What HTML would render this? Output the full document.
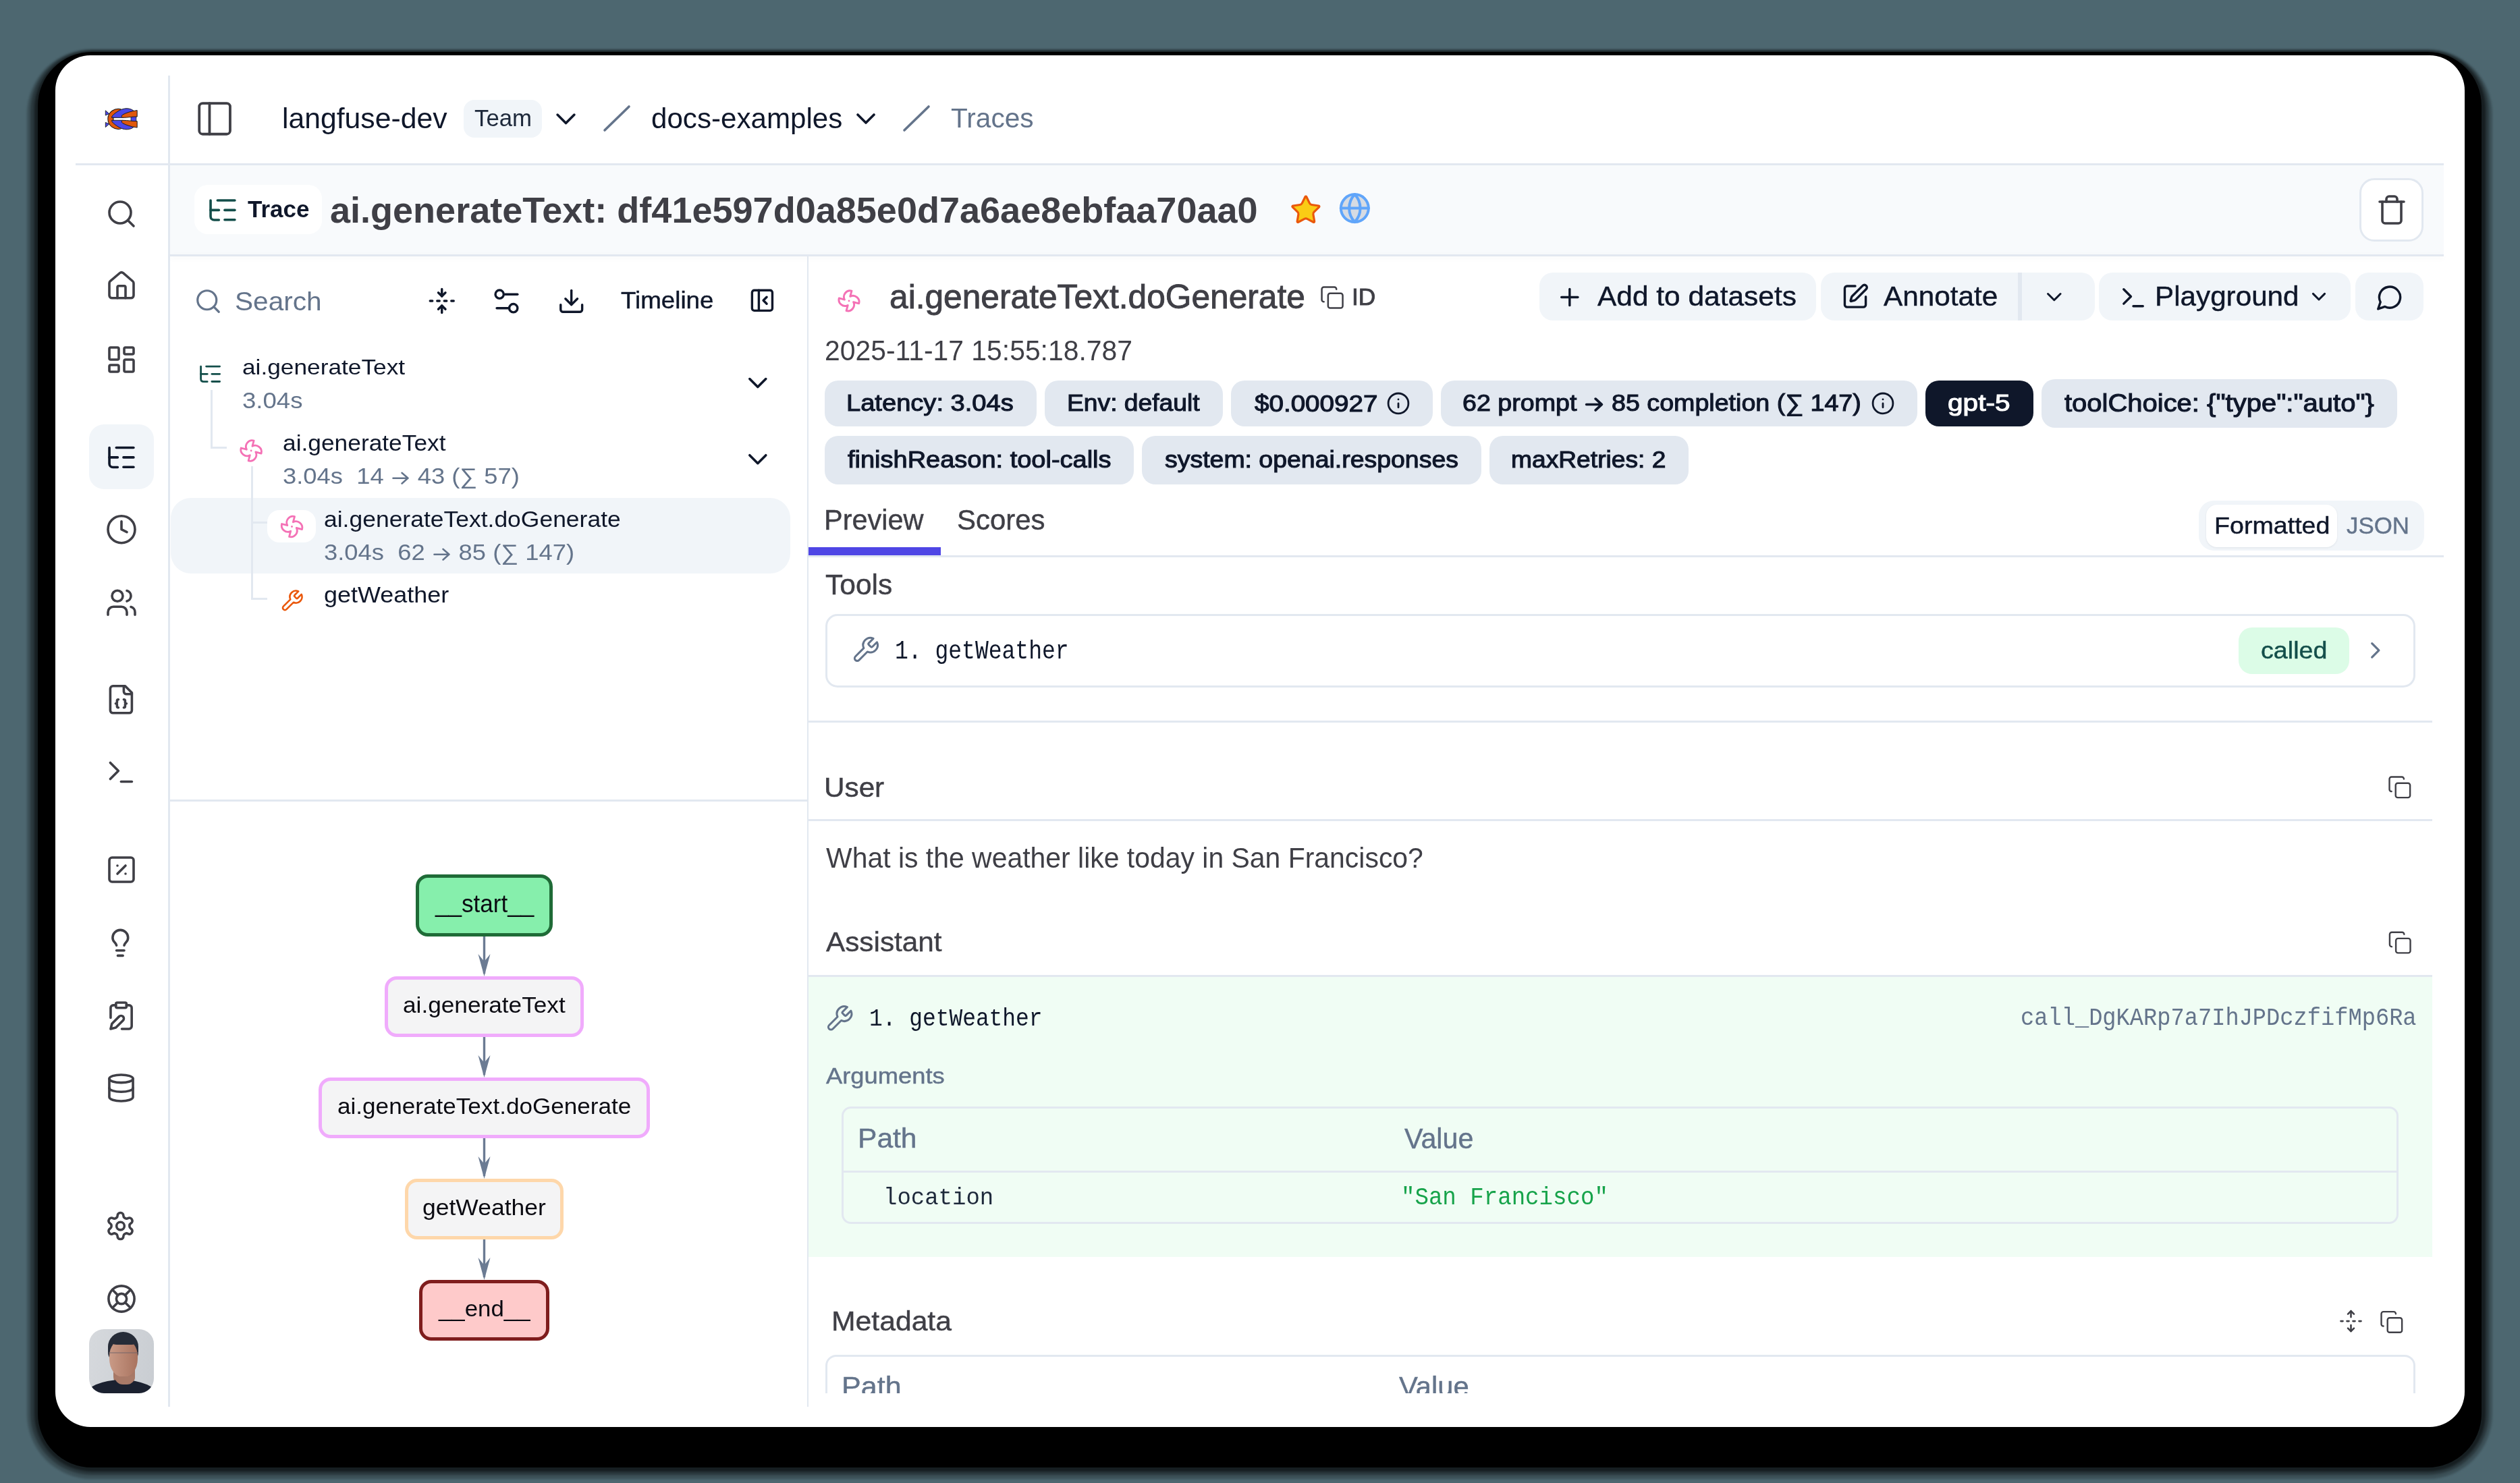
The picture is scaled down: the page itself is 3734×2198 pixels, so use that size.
<!DOCTYPE html>
<html><head><meta charset="utf-8"><style>
html,body{margin:0;padding:0;width:3734px;height:2198px;overflow:hidden;background:#4d6770;}
.r{position:absolute;box-sizing:border-box;}
.t{position:absolute;white-space:pre;line-height:1;font-family:"Liberation Sans",sans-serif;transform-origin:0 0;}
svg.main{position:absolute;left:0;top:0;}
.ia{width:.78em;height:.78em;vertical-align:-0.12em;margin:0 .02em;}
</style></head><body>
<div class=r style='left:40px;top:73px;width:3653px;height:2119px;border-radius:96px;background:rgba(0,0,0,.22);filter:blur(1.5px)'></div>
<div class=r style='left:45px;top:74px;width:3643px;height:2112px;border-radius:91px;background:rgba(0,0,0,.3);filter:blur(1.5px)'></div>
<div class=r style='left:51px;top:75.5px;width:3632px;height:2105px;border-radius:86px;background:rgba(0,0,0,.45);filter:blur(1.5px)'></div>
<div class=r style='left:56px;top:77px;width:3621px;height:2098px;border-radius:80px;background:#000'></div>
<div class=r style='left:82px;top:82px;width:3570px;height:2033px;background:#fff;border-radius:52px;'></div>
<div class=r style='left:112px;top:242px;width:3509px;height:3px;background:#e2e8f0;'></div>
<div class=r style='left:249px;top:112px;width:3px;height:1973px;background:#e2e8f0;'></div>
<div class=r style='left:252px;top:245px;width:3369px;height:132px;background:#f8fafc;'></div>
<div class=r style='left:252px;top:377px;width:3369px;height:3px;background:#e2e8f0;box-shadow:0 3px 8px rgba(15,23,42,.05);'></div>
<div class=r style='left:1196px;top:380px;width:2px;height:1705px;background:#e2e8f0;'></div>
<div class=r style='left:252px;top:1185px;width:944px;height:3px;background:#e2e8f0;'></div>
<div class=r style='left:132px;top:629px;width:96px;height:96px;background:#f1f5f9;border-radius:22px;'></div>
<div class=r style='left:687px;top:148px;width:116px;height:56px;background:#f1f5f9;border-radius:16px;'></div>
<div class=r style='left:288px;top:274px;width:189px;height:73px;background:#fff;border-radius:20px;'></div>
<div class=r style='left:3496px;top:264px;width:95px;height:94px;background:#fff;border-radius:22px;border:3px solid #e2e8f0;'></div>
<div class=r style='left:2281px;top:404px;width:410px;height:71px;background:#f1f5f9;border-radius:20px;'></div>
<div class=r style='left:2698px;top:404px;width:406px;height:71px;background:#f1f5f9;border-radius:20px;'></div>
<div class=r style='left:2990px;top:404px;width:6px;height:71px;background:#e2e8f0;'></div>
<div class=r style='left:3110px;top:404px;width:373px;height:71px;background:#f1f5f9;border-radius:20px;'></div>
<div class=r style='left:3490px;top:404px;width:101px;height:71px;background:#f1f5f9;border-radius:20px;'></div>
<div class=r style='left:1222px;top:564px;width:314px;height:68px;background:#e2e8f0;border-radius:20px;'></div>
<div class=r style='left:1548px;top:564px;width:264px;height:68px;background:#e2e8f0;border-radius:20px;'></div>
<div class=r style='left:1824px;top:564px;width:299px;height:68px;background:#e2e8f0;border-radius:20px;'></div>
<div class=r style='left:2135px;top:564px;width:706px;height:68px;background:#e2e8f0;border-radius:20px;'></div>
<div class=r style='left:2853px;top:564px;width:160px;height:68px;background:#0f172a;border-radius:20px;'></div>
<div class=r style='left:3025px;top:562px;width:527px;height:72px;background:#e2e8f0;border-radius:20px;'></div>
<div class=r style='left:1222px;top:646px;width:458px;height:72px;background:#e2e8f0;border-radius:20px;'></div>
<div class=r style='left:1692px;top:646px;width:503px;height:72px;background:#e2e8f0;border-radius:20px;'></div>
<div class=r style='left:2207px;top:646px;width:295px;height:72px;background:#e2e8f0;border-radius:20px;'></div>
<div class=r style='left:1198px;top:823px;width:2423px;height:3px;background:#e2e8f0;'></div>
<div class=r style='left:1198px;top:811px;width:196px;height:12px;background:#4f46e5;'></div>
<div class=r style='left:3258px;top:742px;width:334px;height:74px;background:#f1f5f9;border-radius:22px;'></div>
<div class=r style='left:3269px;top:748px;width:194px;height:63px;background:#fff;border-radius:16px;box-shadow:0 1px 3px rgba(15,23,42,.08);'></div>
<div class=r style='left:1223px;top:910px;width:2356px;height:109px;background:#fff;border-radius:18px;border:3px solid #e2e8f0;'></div>
<div class=r style='left:3317px;top:930px;width:164px;height:69px;background:#dcfce7;border-radius:20px;'></div>
<div class=r style='left:1198px;top:1068px;width:2406px;height:3px;background:#e2e8f0;'></div>
<div class=r style='left:1198px;top:1214px;width:2406px;height:3px;background:#e2e8f0;'></div>
<div class=r style='left:1198px;top:1445px;width:2406px;height:3px;background:#e2e8f0;'></div>
<div class=r style='left:1198px;top:1448px;width:2406px;height:415px;background:#f0fdf4;'></div>
<div class=r style='left:1247px;top:1640px;width:2307px;height:174px;border-radius:14px;border:3px solid #e2e8f0;'></div>
<div class=r style='left:1249px;top:1735px;width:2303px;height:3px;background:#e2e8f0;'></div>
<div class=r style='left:1223px;top:2008px;width:2356px;height:57px;border:3px solid #e2e8f0;border-bottom:none;border-radius:16px 16px 0 0'></div>
<div class=r style='left:253px;top:738px;width:918px;height:112px;background:#f1f5f9;border-radius:30px;'></div>
<div class=r style='left:396px;top:756px;width:72px;height:48px;background:#fff;border-radius:18px;'></div>
<div class=r style='left:312px;top:578px;width:3px;height:87px;background:#e2e8f0;'></div>
<div class=r style='left:312px;top:662px;width:24px;height:3px;background:#e2e8f0;'></div>
<div class=r style='left:372px;top:691px;width:3px;height:198px;background:#e2e8f0;'></div>
<div class=r style='left:372px;top:773px;width:24px;height:3px;background:#e2e8f0;'></div>
<div class=r style='left:372px;top:886px;width:24px;height:3px;background:#e2e8f0;'></div>
<div class=r style='left:616px;top:1296px;width:203px;height:92px;background:#86efac;border-radius:18px;border:5px solid #1f6b37;'></div>
<div class=r style='left:570px;top:1447px;width:295px;height:90px;background:#f4f4f5;border-radius:18px;border:5px solid #f0abfc;'></div>
<div class=r style='left:472px;top:1597px;width:491px;height:90px;background:#f4f4f5;border-radius:18px;border:5px solid #f0abfc;'></div>
<div class=r style='left:600px;top:1747px;width:235px;height:90px;background:#f4f4f5;border-radius:18px;border:5px solid #fed7aa;'></div>
<div class=r style='left:621px;top:1897px;width:193px;height:90px;background:#fecaca;border-radius:18px;border:5px solid #7f1d1d;'></div>
<div class=r style='left:132px;top:1970px;width:96px;height:95px;border-radius:22px;overflow:hidden;background:linear-gradient(100deg,#d6d9dd,#c9cdd2)'>
<div class=r style='left:28px;top:4px;width:45px;height:44px;border-radius:50% 50% 30% 30%;background:#262c38'></div>
<div class=r style='left:36px;top:56px;width:32px;height:30px;border-radius:0 0 16px 16px;background:#a77866'></div>
<div class=r style='left:30px;top:15px;width:42px;height:56px;border-radius:45% 45% 48% 48%;background:linear-gradient(90deg,#c99a86,#a9735f)'></div>
<div class=r style='left:34px;top:11px;width:36px;height:12px;border-radius:50% 50% 20% 20%;background:#262c38'></div>
<div class=r style='left:29px;top:34px;width:44px;height:1.5px;background:#6d6269;opacity:.45'></div>
<div class=r style='left:-6px;top:75px;width:108px;height:50px;border-radius:50% 50% 0 0;background:#1b2130'></div>
<div class=r style='left:38px;top:70px;width:30px;height:12px;border-radius:0 0 15px 15px;background:#a97a68'></div>
</div>
<svg class=main width="3734" height="2198" viewBox="0 0 3734 2198">
<g transform="translate(156.00,293.00) scale(2.0000)" fill="none" stroke="#3f3f46" stroke-width="1.800" stroke-linecap="round" stroke-linejoin="round" ><circle cx="11" cy="11" r="8"/><path d="m21 21-4.3-4.3"/></g>
<g transform="translate(156.00,399.80) scale(2.0000)" fill="none" stroke="#3f3f46" stroke-width="1.800" stroke-linecap="round" stroke-linejoin="round" ><path d="M15 21v-8a1 1 0 0 0-1-1h-4a1 1 0 0 0-1 1v8"/><path d="M3 10a2 2 0 0 1 .709-1.528l7-5.999a2 2 0 0 1 2.582 0l7 5.999A2 2 0 0 1 21 10v9a2 2 0 0 1-2 2H5a2 2 0 0 1-2-2z"/></g>
<g transform="translate(156.00,509.00) scale(2.0000)" fill="none" stroke="#3f3f46" stroke-width="1.800" stroke-linecap="round" stroke-linejoin="round" ><rect width="7" height="9" x="3" y="3" rx="1"/><rect width="7" height="5" x="14" y="3" rx="1"/><rect width="7" height="9" x="14" y="12" rx="1"/><rect width="7" height="5" x="3" y="16" rx="1"/></g>
<g transform="translate(160.00,661.50) scale(2.0500)" fill="none" stroke="#0f172a" stroke-width="1.756" stroke-linecap="round" stroke-linejoin="round"><path d="M1 1v11.5c0 1.6 1.1 2.6 2.6 2.6H7"/><path d="M1 8h6"/><path d="M6 1h12.5"/><path d="M11.2 8h7.3"/><path d="M11.2 15h7.3"/></g>
<g transform="translate(156.00,760.70) scale(2.0000)" fill="none" stroke="#3f3f46" stroke-width="1.800" stroke-linecap="round" stroke-linejoin="round" ><circle cx="12" cy="12" r="10"/><polyline points="12 6 12 12 16 14"/></g>
<g transform="translate(156.00,869.30) scale(2.0000)" fill="none" stroke="#3f3f46" stroke-width="1.800" stroke-linecap="round" stroke-linejoin="round" ><path d="M16 21v-2a4 4 0 0 0-4-4H6a4 4 0 0 0-4 4v2"/><circle cx="9" cy="7" r="4"/><path d="M22 21v-2a4 4 0 0 0-3-3.87"/><path d="M16 3.13a4 4 0 0 1 0 7.75"/></g>
<g transform="translate(155.40,1012.80) scale(2.0000)" fill="none" stroke="#3f3f46" stroke-width="1.800" stroke-linecap="round" stroke-linejoin="round" ><path d="M15 2H6a2 2 0 0 0-2 2v16a2 2 0 0 0 2 2h12a2 2 0 0 0 2-2V7Z"/><path d="M14 2v4a2 2 0 0 0 2 2h4"/><path d="M10 12a1 1 0 0 0-1 1v1a1 1 0 0 1-1 1 1 1 0 0 1 1 1v1a1 1 0 0 0 1 1"/><path d="M14 18a1 1 0 0 0 1-1v-1a1 1 0 0 1 1-1 1 1 0 0 1-1-1v-1a1 1 0 0 0-1-1"/></g>
<g transform="translate(155.40,1120.50) scale(2.0000)" fill="none" stroke="#3f3f46" stroke-width="1.800" stroke-linecap="round" stroke-linejoin="round" ><polyline points="4 17 10 11 4 5"/><line x1="12" x2="20" y1="19" y2="19"/></g>
<g transform="translate(156.00,1265.00) scale(2.0000)" fill="none" stroke="#3f3f46" stroke-width="1.800" stroke-linecap="round" stroke-linejoin="round" ><rect width="18" height="18" x="3" y="3" rx="2"/><path d="m15 9-6 6"/><path d="M9 9h.01"/><path d="M15 15h.01"/></g>
<g transform="translate(155.50,1374.60) scale(1.9000)" fill="none" stroke="#3f3f46" stroke-width="1.895" stroke-linecap="round" stroke-linejoin="round" ><path d="M15 14c.2-1 .7-1.7 1.5-2.5 1-.9 1.5-2.2 1.5-3.5A6 6 0 0 0 6 8c0 1 .2 2.2 1.5 3.5.7.7 1.3 1.5 1.5 2.5"/><path d="M9 18h6"/><path d="M10 22h4"/></g>
<g transform="translate(156.15,1482.05) scale(1.9500)" fill="none" stroke="#3f3f46" stroke-width="1.846" stroke-linecap="round" stroke-linejoin="round" ><rect width="8" height="4" x="8" y="2" rx="1"/><path d="M10.42 12.61a2.1 2.1 0 1 1 2.97 2.97L7.95 21 4 22l.99-3.95 5.43-5.44Z"/><path d="M16 4h2a2 2 0 0 1 2 2v14a2 2 0 0 1-2 2h-5.5"/><path d="M4 13.5V6a2 2 0 0 1 2-2h2"/></g>
<g transform="translate(156.10,1589.05) scale(1.9500)" fill="none" stroke="#3f3f46" stroke-width="1.846" stroke-linecap="round" stroke-linejoin="round" ><ellipse cx="12" cy="5" rx="9" ry="3"/><path d="M3 5V19A9 3 0 0 0 21 19V5"/><path d="M3 12A9 3 0 0 0 21 12"/></g>
<g transform="translate(155.10,1793.65) scale(1.9500)" fill="none" stroke="#3f3f46" stroke-width="1.846" stroke-linecap="round" stroke-linejoin="round" ><path d="M12.22 2h-.44a2 2 0 0 0-2 2v.18a2 2 0 0 1-1 1.73l-.43.25a2 2 0 0 1-2 0l-.15-.08a2 2 0 0 0-2.73.73l-.22.38a2 2 0 0 0 .73 2.73l.15.1a2 2 0 0 1 1 1.72v.51a2 2 0 0 1-1 1.74l-.15.09a2 2 0 0 0-.73 2.73l.22.38a2 2 0 0 0 2.73.73l.15-.08a2 2 0 0 1 2 0l.43.25a2 2 0 0 1 1 1.73V20a2 2 0 0 0 2 2h.44a2 2 0 0 0 2-2v-.18a2 2 0 0 1 1-1.73l.43-.25a2 2 0 0 1 2 0l.15.08a2 2 0 0 0 2.73-.73l.22-.39a2 2 0 0 0-.73-2.73l-.15-.08a2 2 0 0 1-1-1.74v-.5a2 2 0 0 1 1-1.74l.15-.09a2 2 0 0 0 .73-2.73l-.22-.38a2 2 0 0 0-2.73-.73l-.15.08a2 2 0 0 1-2 0l-.43-.25a2 2 0 0 1-1-1.73V4a2 2 0 0 0-2-2z"/><circle cx="12" cy="12" r="3"/></g>
<g transform="translate(157.09,1902.09) scale(1.9100)" fill="none" stroke="#3f3f46" stroke-width="1.885" stroke-linecap="round" stroke-linejoin="round" ><circle cx="12" cy="12" r="10"/><path d="m4.93 4.93 4.24 4.24"/><path d="m14.83 9.17 4.24-4.24"/><path d="m14.83 14.83 4.24 4.24"/><path d="m9.17 14.83-4.24 4.24"/><circle cx="12" cy="12" r="4"/></g>
<g transform="translate(287.62,145.42) scale(2.5400)" fill="none" stroke="#3f3f46" stroke-width="1.496" stroke-linecap="round" stroke-linejoin="round" ><rect width="18" height="18" x="3" y="3" rx="2"/><path d="M9 3v18"/></g>
<g transform="translate(813.65,151.44) scale(2.0700)" fill="none" stroke="#0f172a" stroke-width="1.739" stroke-linecap="round" stroke-linejoin="round" ><path d="m6 9 6 6 6-6"/></g>
<g transform="translate(1259.00,152.00) scale(2.0000)" fill="none" stroke="#0f172a" stroke-width="1.800" stroke-linecap="round" stroke-linejoin="round" ><path d="m6 9 6 6 6-6"/></g>
<path d="M896 193 L932 158" stroke="#64748b" stroke-width="3.6" stroke-linecap="round"/>
<path d="M1340 193 L1376 158" stroke="#64748b" stroke-width="3.6" stroke-linecap="round"/>
<g transform="translate(310.00,295.00) scale(2.0500)" fill="none" stroke="#134e4a" stroke-width="1.756" stroke-linecap="round" stroke-linejoin="round"><path d="M1 1v11.5c0 1.6 1.1 2.6 2.6 2.6H7"/><path d="M1 8h6"/><path d="M6 1h12.5"/><path d="M11.2 8h7.3"/><path d="M11.2 15h7.3"/></g>
<g transform="translate(1910.90,287.20) scale(2.0000)" fill="#facc15" stroke="#ea580c" stroke-width="1.600" stroke-linecap="round" stroke-linejoin="round" ><path d="M11.525 2.295a.53.53 0 0 1 .95 0l2.31 4.679a2.123 2.123 0 0 0 1.595 1.16l5.166.756a.53.53 0 0 1 .294.904l-3.736 3.638a2.123 2.123 0 0 0-.611 1.878l.882 5.14a.53.53 0 0 1-.771.56l-4.618-2.428a2.122 2.122 0 0 0-1.973 0L6.396 21.01a.53.53 0 0 1-.77-.56l.881-5.139a2.122 2.122 0 0 0-.611-1.879L2.16 9.795a.53.53 0 0 1 .294-.906l5.165-.755a2.122 2.122 0 0 0 1.597-1.16z"/></g>
<g transform="translate(1982.75,283.95) scale(2.0500)" fill="#d6dbe3" stroke="#60a5fa" stroke-width="1.951" stroke-linecap="round" stroke-linejoin="round" ><circle cx="12" cy="12" r="10"/><path d="M12 2a14.5 14.5 0 0 0 0 20 14.5 14.5 0 0 0 0-20"/><path d="M2 12h20"/></g>
<g transform="translate(3520.00,287.00) scale(2.0000)" fill="none" stroke="#3f3f46" stroke-width="1.800" stroke-linecap="round" stroke-linejoin="round" ><path d="M3 6h18"/><path d="M19 6v14c0 1-1 2-2 2H7c-1 0-2-1-2-2V6"/><path d="M8 6V4c0-1 1-2 2-2h4c1 0 2 1 2 2v2"/></g>
<g transform="translate(287.50,425.50) scale(1.7500)" fill="none" stroke="#64748b" stroke-width="1.829" stroke-linecap="round" stroke-linejoin="round" ><circle cx="11" cy="11" r="8"/><path d="m21 21-4.3-4.3"/></g>
<g transform="translate(633.75,424.95) scale(1.7500)" fill="none" stroke="#0f172a" stroke-width="1.943" stroke-linecap="round" stroke-linejoin="round" ><path d="M12 22v-6"/><path d="M12 8V2"/><path d="M4 12H2"/><path d="M10 12H8"/><path d="M16 12h-2"/><path d="M22 12h-2"/><path d="m15 19-3-3-3 3"/><path d="m15 5-3 3-3-3"/></g>
<g transform="translate(725.85,421.85) scale(2.0500)" fill="none" stroke="#0f172a" stroke-width="1.659" stroke-linecap="round" stroke-linejoin="round" ><path d="M20 7h-9"/><path d="M14 17H5"/><circle cx="17" cy="17" r="3"/><circle cx="7" cy="7" r="3"/></g>
<g transform="translate(825.46,425.06) scale(1.7700)" fill="none" stroke="#0f172a" stroke-width="1.921" stroke-linecap="round" stroke-linejoin="round" ><path d="M21 15v4a2 2 0 0 1-2 2H5a2 2 0 0 1-2-2v-4"/><polyline points="7 10 12 15 17 10"/><line x1="12" x2="12" y1="15" y2="3"/></g>
<g transform="translate(1109.36,425.26) scale(1.6700)" fill="none" stroke="#0f172a" stroke-width="2.036" stroke-linecap="round" stroke-linejoin="round" ><rect width="18" height="18" x="3" y="3" rx="2"/><path d="M9 3v18"/><path d="m16 15-3-3 3-3"/></g>
<g transform="translate(296.00,541.50) scale(1.6000)" fill="none" stroke="#134e4a" stroke-width="1.750" stroke-linecap="round" stroke-linejoin="round"><path d="M1 1v11.5c0 1.6 1.1 2.6 2.6 2.6H7"/><path d="M1 8h6"/><path d="M6 1h12.5"/><path d="M11.2 8h7.3"/><path d="M11.2 15h7.3"/></g>
<g transform="translate(353.76,649.66) scale(1.5300)" fill="none" stroke="#f472b6" stroke-width="1.830" stroke-linecap="round" stroke-linejoin="round" ><path d="M10.827 16.379a6.082 6.082 0 0 1-8.618-7.002l5.412 1.45a6.082 6.082 0 0 1 7.002-8.618l-1.45 5.412a6.082 6.082 0 0 1 8.618 7.002l-5.412-1.45a6.082 6.082 0 0 1-7.002 8.618l1.45-5.412Z"/><path d="M12 12v.01"/></g>
<g transform="translate(414.16,762.16) scale(1.5300)" fill="none" stroke="#f472b6" stroke-width="1.830" stroke-linecap="round" stroke-linejoin="round" ><path d="M10.827 16.379a6.082 6.082 0 0 1-8.618-7.002l5.412 1.45a6.082 6.082 0 0 1 7.002-8.618l-1.45 5.412a6.082 6.082 0 0 1 8.618 7.002l-5.412-1.45a6.082 6.082 0 0 1-7.002 8.618l1.45-5.412Z"/><path d="M12 12v.01"/></g>
<g transform="translate(414.50,872.60) scale(1.5000)" fill="none" stroke="#ea580c" stroke-width="1.733" stroke-linecap="round" stroke-linejoin="round" ><path d="M14.7 6.3a1 1 0 0 0 0 1.4l1.6 1.6a1 1 0 0 0 1.4 0l3.77-3.77a6 6 0 0 1-7.94 7.94l-6.91 6.91a2.12 2.12 0 0 1-3-3l6.91-6.91a6 6 0 0 1 7.94-7.94l-3.76 3.76z"/></g>
<g transform="translate(1098.80,543.60) scale(2.0000)" fill="none" stroke="#0f172a" stroke-width="1.800" stroke-linecap="round" stroke-linejoin="round" ><path d="m6 9 6 6 6-6"/></g>
<g transform="translate(1098.80,656.70) scale(2.0000)" fill="none" stroke="#0f172a" stroke-width="1.800" stroke-linecap="round" stroke-linejoin="round" ><path d="m6 9 6 6 6-6"/></g>
<g transform="translate(1240.00,427.90) scale(1.5000)" fill="none" stroke="#f472b6" stroke-width="1.933" stroke-linecap="round" stroke-linejoin="round" ><path d="M10.827 16.379a6.082 6.082 0 0 1-8.618-7.002l5.412 1.45a6.082 6.082 0 0 1 7.002-8.618l-1.45 5.412a6.082 6.082 0 0 1 8.618 7.002l-5.412-1.45a6.082 6.082 0 0 1-7.002 8.618l1.45-5.412Z"/><path d="M12 12v.01"/></g>
<g transform="translate(1955.45,422.45) scale(1.5500)" fill="none" stroke="#3f3f46" stroke-width="1.613" stroke-linecap="round" stroke-linejoin="round" ><rect width="14" height="14" x="8" y="8" rx="2" ry="2"/><path d="M4 16c-1.1 0-2-.9-2-2V4c0-1.1.9-2 2-2h10c1.1 0 2 .9 2 2"/></g>
<g transform="translate(2305.08,419.78) scale(1.7300)" fill="none" stroke="#0f172a" stroke-width="1.965" stroke-linecap="round" stroke-linejoin="round" ><path d="M5 12h14"/><path d="M12 5v14"/></g>
<g transform="translate(2728.24,418.83) scale(1.7300)" fill="none" stroke="#0f172a" stroke-width="1.965" stroke-linecap="round" stroke-linejoin="round" ><path d="M12 3H5a2 2 0 0 0-2 2v14a2 2 0 0 0 2 2h14a2 2 0 0 0 2-2v-7"/><path d="M18.375 2.625a1 1 0 0 1 3 3l-9.013 9.014a2 2 0 0 1-.853.505l-2.873.84a.5.5 0 0 1-.62-.62l.84-2.873a2 2 0 0 1 .506-.852z"/></g>
<g transform="translate(3025.30,421.68) scale(1.5400)" fill="none" stroke="#0f172a" stroke-width="1.948" stroke-linecap="round" stroke-linejoin="round" ><path d="m6 9 6 6 6-6"/></g>
<g transform="translate(3139.66,419.88) scale(1.7800)" fill="none" stroke="#0f172a" stroke-width="1.910" stroke-linecap="round" stroke-linejoin="round" ><polyline points="4 17 10 11 4 5"/><line x1="12" x2="20" y1="19" y2="19"/></g>
<g transform="translate(3418.85,422.56) scale(1.4300)" fill="none" stroke="#0f172a" stroke-width="2.098" stroke-linecap="round" stroke-linejoin="round" ><path d="m6 9 6 6 6-6"/></g>
<g transform="translate(3520.27,419.87) scale(1.7300)" fill="none" stroke="#0f172a" stroke-width="1.965" stroke-linecap="round" stroke-linejoin="round" ><path d="M7.9 20A9 9 0 1 0 4 16.1L2 22Z"/></g>
<g transform="translate(2054.11,580.01) scale(1.4900)" fill="none" stroke="#0f172a" stroke-width="1.879" stroke-linecap="round" stroke-linejoin="round" ><circle cx="12" cy="12" r="10"/><path d="M12 16v-4"/><path d="M12 8h.01"/></g>
<g transform="translate(2772.11,580.01) scale(1.4900)" fill="none" stroke="#0f172a" stroke-width="1.879" stroke-linecap="round" stroke-linejoin="round" ><circle cx="12" cy="12" r="10"/><path d="M12 16v-4"/><path d="M12 8h.01"/></g>
<g transform="translate(1261.01,941.84) scale(1.7900)" fill="none" stroke="#64748b" stroke-width="1.676" stroke-linecap="round" stroke-linejoin="round" ><path d="M14.7 6.3a1 1 0 0 0 0 1.4l1.6 1.6a1 1 0 0 0 1.4 0l3.77-3.77a6 6 0 0 1-7.94 7.94l-6.91 6.91a2.12 2.12 0 0 1-3-3l6.91-6.91a6 6 0 0 1 7.94-7.94l-3.76 3.76z"/></g>
<g transform="translate(3499.40,943.50) scale(1.7000)" fill="none" stroke="#64748b" stroke-width="1.882" stroke-linecap="round" stroke-linejoin="round" ><path d="m9 18 6-6-6-6"/></g>
<g transform="translate(3537.47,1148.47) scale(1.5300)" fill="none" stroke="#3f3f46" stroke-width="1.569" stroke-linecap="round" stroke-linejoin="round" ><rect width="14" height="14" x="8" y="8" rx="2" ry="2"/><path d="M4 16c-1.1 0-2-.9-2-2V4c0-1.1.9-2 2-2h10c1.1 0 2 .9 2 2"/></g>
<g transform="translate(3537.87,1378.67) scale(1.5300)" fill="none" stroke="#3f3f46" stroke-width="1.569" stroke-linecap="round" stroke-linejoin="round" ><rect width="14" height="14" x="8" y="8" rx="2" ry="2"/><path d="M4 16c-1.1 0-2-.9-2-2V4c0-1.1.9-2 2-2h10c1.1 0 2 .9 2 2"/></g>
<g transform="translate(1221.99,1488.10) scale(1.8100)" fill="none" stroke="#64748b" stroke-width="1.657" stroke-linecap="round" stroke-linejoin="round" ><path d="M14.7 6.3a1 1 0 0 0 0 1.4l1.6 1.6a1 1 0 0 0 1.4 0l3.77-3.77a6 6 0 0 1-7.94 7.94l-6.91 6.91a2.12 2.12 0 0 1-3-3l6.91-6.91a6 6 0 0 1 7.94-7.94l-3.76 3.76z"/></g>
<g transform="translate(3465.50,1940.10) scale(1.5000)" fill="none" stroke="#3f3f46" stroke-width="1.733" stroke-linecap="round" stroke-linejoin="round" ><path d="M12 22v-6"/><path d="M12 8V2"/><path d="M4 12H2"/><path d="M10 12H8"/><path d="M16 12h-2"/><path d="M22 12h-2"/><path d="m15 19-3 3-3-3"/><path d="m15 5-3-3-3 3"/></g>
<g transform="translate(3525.47,1941.07) scale(1.5300)" fill="none" stroke="#3f3f46" stroke-width="1.569" stroke-linecap="round" stroke-linejoin="round" ><rect width="14" height="14" x="8" y="8" rx="2" ry="2"/><path d="M4 16c-1.1 0-2-.9-2-2V4c0-1.1.9-2 2-2h10c1.1 0 2 .9 2 2"/></g>
<path d="M717.5 1388 V1443" stroke="#6b7b93" stroke-width="3.4"/>
<path d="M708.5 1414 L717.5 1425 L726.5 1414 L717.5 1447 Z" fill="#6b7b93"/>
<path d="M717.5 1537 V1593" stroke="#6b7b93" stroke-width="3.4"/>
<path d="M708.5 1564 L717.5 1575 L726.5 1564 L717.5 1597 Z" fill="#6b7b93"/>
<path d="M717.5 1687 V1743" stroke="#6b7b93" stroke-width="3.4"/>
<path d="M708.5 1714 L717.5 1725 L726.5 1714 L717.5 1747 Z" fill="#6b7b93"/>
<path d="M717.5 1837 V1893" stroke="#6b7b93" stroke-width="3.4"/>
<path d="M708.5 1864 L717.5 1875 L726.5 1864 L717.5 1897 Z" fill="#6b7b93"/>
<path d="M156.3 163.8 L161.8 168.6 L156.3 171 Z" fill="#4b47e6" stroke="#1b1d22" stroke-width="0.9"/>
<path d="M156.3 181.4 L161.8 183.8 L156.3 188.6 Z" fill="#4b47e6" stroke="#1b1d22" stroke-width="0.9"/>
<path d="M178.5 165.6 A11.6 11.1 0 1 0 178.5 187" fill="none" stroke="#15171c" stroke-width="9.0" stroke-linecap="butt"/><path d="M178.5 165.6 A11.6 11.1 0 1 0 178.5 187" fill="none" stroke="#e0580c" stroke-width="7.0" stroke-linecap="butt"/>
<path d="M165.5 174.3 L181 174.3 L196 171 L201.5 171.5 L201.5 169 C199 163 193 160.6 187 160.8 C180 161 174 165 168.5 169.5 C167 170.8 165.5 172.5 165.5 174.3 Z" fill="#4b47e6" stroke="#1b1d22" stroke-width="1"/>
<path d="M165.5 178.3 L181 178.3 L196 181.6 L201.5 181.1 L201.5 183.6 C199 189.6 193 192 187 191.8 C180 191.6 174 187.6 168.5 183.1 C167 181.8 165.5 180.1 165.5 178.3 Z" fill="#4b47e6" stroke="#1b1d22" stroke-width="1"/>
<path d="M194 171.3 L201.8 171 L201.8 181.6 L194 181.3 Z" fill="#4b47e6" stroke="#1b1d22" stroke-width="0.8"/>
<path d="M181.5 174.3 C180 174.3 179.8 171 181.5 170.2 C187 167 194 165 203.2 163.5 L203.2 173 C197 172.6 190 174.3 181.5 174.3 Z" fill="#e0580c" stroke="#1b1d22" stroke-width="1"/>
<path d="M181.5 178.3 C180 178.3 179.8 181.6 181.5 182.4 C187 185.6 194 187.6 203.2 189.1 L203.2 179.6 C197 180 190 178.3 181.5 178.3 Z" fill="#e0580c" stroke="#1b1d22" stroke-width="1"/>
</svg>
<div class=t style='left:418.0px;top:153.8px;font-size:43.15px;color:#0f172a;transform:scaleX(0.9898);'>langfuse-dev</div>
<div class=t style='left:703.0px;top:158.3px;font-size:35.65px;color:#1e293b;transform:scaleX(0.9762);'>Team</div>
<div class=t style='left:964.7px;top:155.0px;font-size:41.78px;color:#0f172a;transform:scaleX(1.0083);'>docs-examples</div>
<div class=t style='left:1409.0px;top:155.4px;font-size:41.30px;color:#64748b;transform:scaleX(0.9836);'>Traces</div>
<div class=t style='left:367.0px;top:293.4px;font-size:34.78px;font-weight:700;color:#0f172a;transform:scaleX(1.0056);'>Trace</div>
<div class=t style='left:489.0px;top:284.6px;font-size:54.35px;font-weight:700;color:#3f3f46;transform:scaleX(0.9942);'>ai.generateText: df41e597d0a85e0d7a6ae8ebfaa70aa0</div>
<div class=t style='left:347.9px;top:426.7px;font-size:39.13px;color:#64748b;transform:scaleX(1.0383);'>Search</div>
<div class=t style='left:919.6px;top:427.2px;font-size:35.94px;color:#0f172a;transform:scaleX(1.0227);-webkit-text-stroke:0.45px #0f172a;'>Timeline</div>
<div class=t style='left:359.4px;top:528.9px;font-size:31.59px;color:#0f172a;transform:scaleX(1.1167);'>ai.generateText</div>
<div class=t style='left:359.4px;top:576.7px;font-size:33.04px;color:#64748b;transform:scaleX(1.1076);'>3.04s</div>
<div class=t style='left:419.3px;top:639.7px;font-size:33.04px;color:#0f172a;transform:scaleX(1.0693);'>ai.generateText</div>
<div class=t style='left:419.3px;top:690.3px;font-size:32.61px;color:#64748b;transform:scaleX(1.1154);'>3.04s  14 <svg class=ia viewBox="0 0 24 24"><path d="M2.5 12h18.5M13.5 4.5 21 12l-7.5 7.5" stroke="currentColor" stroke-width="2.3" fill="none" stroke-linecap="round" stroke-linejoin="round"/></svg> 43 (∑ 57)</div>
<div class=t style='left:479.6px;top:752.7px;font-size:33.19px;color:#0f172a;transform:scaleX(1.0692);'>ai.generateText.doGenerate</div>
<div class=t style='left:479.6px;top:803.3px;font-size:32.61px;color:#64748b;transform:scaleX(1.1152);'>3.04s  62 <svg class=ia viewBox="0 0 24 24"><path d="M2.5 12h18.5M13.5 4.5 21 12l-7.5 7.5" stroke="currentColor" stroke-width="2.3" fill="none" stroke-linecap="round" stroke-linejoin="round"/></svg> 85 (∑ 147)</div>
<div class=t style='left:479.6px;top:864.7px;font-size:33.04px;color:#0f172a;transform:scaleX(1.0888);'>getWeather</div>
<div class=t style='left:1318.2px;top:416.3px;font-size:49.06px;color:#3f3f46;transform:scaleX(1.0129);-webkit-text-stroke:0.9px #3f3f46;'>ai.generateText.doGenerate</div>
<div class=t style='left:2003.0px;top:423.4px;font-size:34.78px;color:#3f3f46;transform:scaleX(1.0161);-webkit-text-stroke:0.9px #3f3f46;'>ID</div>
<div class=t style='left:2367.0px;top:419.1px;font-size:41.01px;color:#0f172a;transform:scaleX(1.0352);-webkit-text-stroke:0.45px #0f172a;'>Add to datasets</div>
<div class=t style='left:2790.5px;top:419.1px;font-size:41.01px;color:#0f172a;transform:scaleX(1.0319);-webkit-text-stroke:0.45px #0f172a;'>Annotate</div>
<div class=t style='left:3192.9px;top:419.1px;font-size:41.01px;color:#0f172a;transform:scaleX(1.0297);-webkit-text-stroke:0.45px #0f172a;'>Playground</div>
<div class=t style='left:1222.1px;top:498.6px;font-size:42.32px;color:#3f3f46;transform:scaleX(0.9658);'>2025-11-17 15:55:18.787</div>
<div class=t style='left:1253.8px;top:580.4px;font-size:34.78px;color:#0f172a;transform:scaleX(1.0955);-webkit-text-stroke:1.1px #0f172a;'>Latency: 3.04s</div>
<div class=t style='left:1580.6px;top:580.4px;font-size:34.78px;color:#0f172a;transform:scaleX(1.0709);-webkit-text-stroke:1.1px #0f172a;'>Env: default</div>
<div class=t style='left:1858.7px;top:581.0px;font-size:34.49px;color:#0f172a;transform:scaleX(1.1191);-webkit-text-stroke:1.1px #0f172a;'>$0.000927</div>
<div class=t style='left:2166.9px;top:580.4px;font-size:34.78px;color:#0f172a;transform:scaleX(1.0818);-webkit-text-stroke:1.1px #0f172a;'>62 prompt <svg class=ia viewBox="0 0 24 24"><path d="M2.5 12h18.5M13.5 4.5 21 12l-7.5 7.5" stroke="currentColor" stroke-width="3.2" fill="none" stroke-linecap="round" stroke-linejoin="round"/></svg> 85 completion (∑ 147)</div>
<div class=t style='left:2885.5px;top:580.4px;font-size:34.78px;color:#fff;transform:scaleX(1.1679);-webkit-text-stroke:1.1px #fff;'>gpt-5</div>
<div class=t style='left:3058.8px;top:578.5px;font-size:37.10px;color:#0f172a;transform:scaleX(1.0779);-webkit-text-stroke:1.1px #0f172a;'>toolChoice: {"type":"auto"}</div>
<div class=t style='left:1256.0px;top:664.4px;font-size:34.78px;color:#0f172a;transform:scaleX(1.0924);-webkit-text-stroke:1.1px #0f172a;'>finishReason: tool-calls</div>
<div class=t style='left:1726.0px;top:664.4px;font-size:34.78px;color:#0f172a;transform:scaleX(1.0769);-webkit-text-stroke:1.1px #0f172a;'>system: openai.responses</div>
<div class=t style='left:2238.9px;top:664.4px;font-size:34.78px;color:#0f172a;transform:scaleX(1.0697);-webkit-text-stroke:1.1px #0f172a;'>maxRetries: 2</div>
<div class=t style='left:1221.1px;top:749.2px;font-size:42.61px;color:#3f3f46;transform:scaleX(0.9732);-webkit-text-stroke:0.45px #3f3f46;'>Preview</div>
<div class=t style='left:1417.8px;top:749.2px;font-size:42.61px;color:#3f3f46;transform:scaleX(0.9845);-webkit-text-stroke:0.45px #3f3f46;'>Scores</div>
<div class=t style='left:3280.5px;top:761.2px;font-size:35.07px;color:#0f172a;transform:scaleX(1.0729);-webkit-text-stroke:0.45px #0f172a;'>Formatted</div>
<div class=t style='left:3476.5px;top:761.2px;font-size:35.07px;color:#64748b;transform:scaleX(0.9945);-webkit-text-stroke:0.45px #64748b;'>JSON</div>
<div class=t style='left:1222.6px;top:846.3px;font-size:41.59px;color:#3f3f46;transform:scaleX(1.0221);-webkit-text-stroke:0.45px #3f3f46;'>Tools</div>
<div class=t style='left:1326.4px;top:947.0px;font-size:37.88px;font-family:"Liberation Mono", monospace;color:#0f172a;transform:scaleX(0.8720);'>1. getWeather</div>
<div class=t style='left:3349.9px;top:946.8px;font-size:34.93px;color:#134e4a;transform:scaleX(1.0795);-webkit-text-stroke:0.45px #134e4a;'>called</div>
<div class=t style='left:1220.5px;top:1147.3px;font-size:40.58px;color:#3f3f46;transform:scaleX(1.0410);-webkit-text-stroke:0.45px #3f3f46;'>User</div>
<div class=t style='left:1223.6px;top:1250.9px;font-size:41.59px;color:#3f3f46;transform:scaleX(0.9843);'>What is the weather like today in San Francisco?</div>
<div class=t style='left:1223.8px;top:1375.8px;font-size:40.87px;color:#3f3f46;transform:scaleX(1.0349);-webkit-text-stroke:0.45px #3f3f46;'>Assistant</div>
<div class=t style='left:1288.0px;top:1492.0px;font-size:37.73px;font-family:"Liberation Mono", monospace;color:#0f172a;transform:scaleX(0.8719);'>1. getWeather</div>
<div class=t style='left:2993.6px;top:1491.3px;font-size:37.27px;font-family:"Liberation Mono", monospace;color:#64748b;transform:scaleX(0.9045);'>call_DgKARp7a7IhJPDczfifMp6Ra</div>
<div class=t style='left:1223.8px;top:1578.4px;font-size:33.62px;color:#64748b;transform:scaleX(1.0815);-webkit-text-stroke:0.45px #64748b;'>Arguments</div>
<div class=t style='left:1271.4px;top:1668.2px;font-size:40.29px;color:#64748b;transform:scaleX(1.0564);-webkit-text-stroke:0.45px #64748b;'>Path</div>
<div class=t style='left:2081.0px;top:1667.3px;font-size:42.03px;color:#64748b;transform:scaleX(0.9806);-webkit-text-stroke:0.45px #64748b;'>Value</div>
<div class=t style='left:1308.8px;top:1759.0px;font-size:34.25px;font-family:"Liberation Mono", monospace;color:#1e293b;transform:scaleX(0.9924);'>location</div>
<div class=t style='left:2076.4px;top:1757.3px;font-size:37.42px;font-family:"Liberation Mono", monospace;color:#16a34a;transform:scaleX(0.9113);'>"San Francisco"</div>
<div class=t style='left:1232.2px;top:1938.3px;font-size:40.87px;color:#3f3f46;transform:scaleX(1.0446);-webkit-text-stroke:0.45px #3f3f46;'>Metadata</div>
<div class=t style='left:1247.4px;top:2035.1px;font-size:41.01px;color:#64748b;transform:scaleX(1.0506);-webkit-text-stroke:0.45px #64748b;'>Path</div>
<div class=t style='left:2073.0px;top:2035.1px;font-size:41.01px;color:#64748b;transform:scaleX(1.0200);-webkit-text-stroke:0.45px #64748b;'>Value</div>
<div class=t style='left:644.9px;top:1321.0px;font-size:37.68px;color:#0b0b12;transform:scaleX(0.9304);'>__start__</div>
<div class=t style='left:596.5px;top:1472.7px;font-size:33.33px;color:#0b0b12;transform:scaleX(1.0564);'>ai.generateText</div>
<div class=t style='left:499.7px;top:1623.1px;font-size:33.48px;color:#0b0b12;transform:scaleX(1.0493);'>ai.generateText.doGenerate</div>
<div class=t style='left:625.9px;top:1773.4px;font-size:33.33px;color:#0b0b12;transform:scaleX(1.0647);'>getWeather</div>
<div class=t style='left:650.0px;top:1922.1px;font-size:34.06px;color:#0b0b12;transform:scaleX(1.0224);'>__end__</div>
<div class=r style='left:1198px;top:2065px;width:2423px;height:20px;background:#fff'></div><div class=r style='left:1196px;top:2065px;width:2px;height:20px;background:#e2e8f0'></div></body></html>
